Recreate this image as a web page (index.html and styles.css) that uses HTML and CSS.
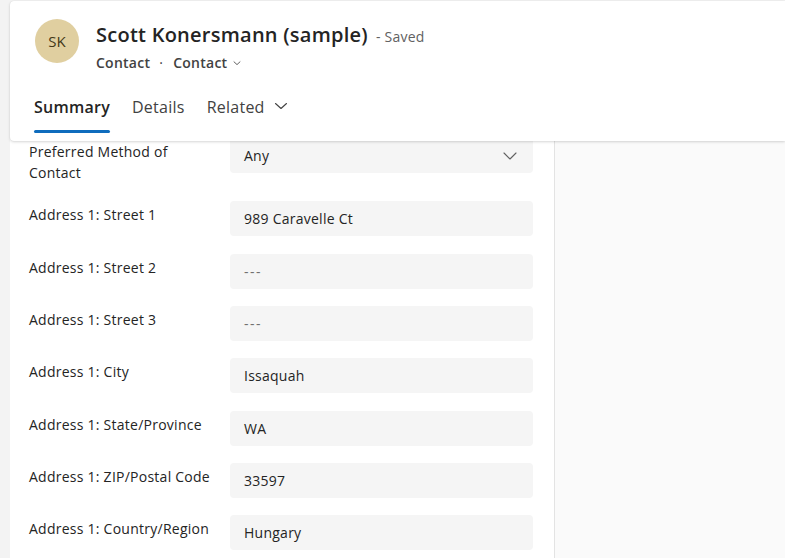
FILE: index.html
```html
<!DOCTYPE html>
<html lang="en">
<head>
<meta charset="utf-8">
<title>Scott Konersmann (sample)</title>
<link rel="stylesheet" href="styles.css">
</head>
<body>
<div class="app">
  <header class="record-header">
    <div class="identity">
      <div class="avatar">SK</div>
      <div class="titles">
        <div class="title-line">
          <h1 class="title">Scott Konersmann (sample)</h1>
          <span class="saved">- Saved</span>
        </div>
        <div class="subtitle">
          <span>Contact</span>
          <span class="dot">·</span>
          <span>Contact</span>
          <svg class="sub-chev" width="10" height="10" viewBox="0 0 10 10"><path d="M2 3.8 L5 6.6 L8 3.8" fill="none" stroke="#616161" stroke-width="1" stroke-linecap="round" stroke-linejoin="round"/></svg>
        </div>
      </div>
    </div>
    <nav class="tabs">
      <span class="tab active">Summary</span>
      <span class="tab">Details</span>
      <span class="tab">Related
        <svg class="tab-chev" width="14" height="14" viewBox="0 0 14 14"><path d="M1.5 4.5 L7 9.5 L12.5 4.5" fill="none" stroke="#424242" stroke-width="1.1" stroke-linecap="round" stroke-linejoin="round"/></svg>
      </span>
    </nav>
  </header>

  <main class="workspace">
    <section class="form-panel">
      <div class="row">
        <label class="label">Preferred Method of Contact</label>
        <div class="field select">
          <span>Any</span>
          <svg class="sel-chev" width="14" height="14" viewBox="0 0 14 14"><path d="M1 4 L7 10 L13 4" fill="none" stroke="#616161" stroke-width="1.1" stroke-linecap="round" stroke-linejoin="round"/></svg>
        </div>
      </div>
      <div class="row">
        <label class="label">Address 1: Street 1</label>
        <div class="field">989 Caravelle Ct</div>
      </div>
      <div class="row">
        <label class="label">Address 1: Street 2</label>
        <div class="field empty">---</div>
      </div>
      <div class="row">
        <label class="label">Address 1: Street 3</label>
        <div class="field empty">---</div>
      </div>
      <div class="row">
        <label class="label">Address 1: City</label>
        <div class="field">Issaquah</div>
      </div>
      <div class="row">
        <label class="label">Address 1: State/Province</label>
        <div class="field">WA</div>
      </div>
      <div class="row">
        <label class="label">Address 1: ZIP/Postal Code</label>
        <div class="field">33597</div>
      </div>
      <div class="row">
        <label class="label">Address 1: Country/Region</label>
        <div class="field">Hungary</div>
      </div>
    </section>
    <aside class="side"></aside>
  </main>
</div>
</body>
</html>
```

FILE: styles.css
```css
* { box-sizing: border-box; }

html, body {
  margin: 0;
  padding: 0;
  height: 100%;
  overflow: hidden;
}

body {
  background: #f3f3f3;
  font-family: "Open Sans", "Noto Sans", sans-serif;
  letter-spacing: 0.25px;
  color: #242424;
}

.app {
  padding: 1px 0 0 10px;
  height: 100%;
  display: flex;
  flex-direction: column;
}

.record-header {
  position: relative;
  z-index: 2;
  background: #ffffff;
  border-radius: 4px 0 0 4px;
  box-shadow: 0 1px 3px rgba(0, 0, 0, 0.16), 0 0 1px rgba(0, 0, 0, 0.10);
  height: 140px;
  padding: 18px 0 0 25px;
  flex-shrink: 0;
}

.identity {
  display: flex;
  align-items: flex-start;
  gap: 17px;
}

.avatar {
  width: 44px;
  height: 44px;
  border-radius: 50%;
  background: #e0cfa0;
  color: #433817;
  font-size: 15px;
  font-weight: 500;
  letter-spacing: 0;
  display: flex;
  align-items: center;
  justify-content: center;
}

.titles {
  display: flex;
  flex-direction: column;
}

.title-line {
  display: flex;
  align-items: baseline;
  gap: 8px;
  height: 32px;
}

.title {
  margin: 0;
  font-size: 20px;
  font-weight: 600;
  color: #242424;
  line-height: 32px;
}

.saved {
  font-size: 14px;
  color: #616161;
}

.subtitle {
  display: flex;
  align-items: center;
  font-size: 14px;
  font-weight: 600;
  color: #424242;
  height: 22px;
}

.subtitle .dot {
  margin: 0 10px 0 9px;
  font-weight: 400;
}

.sub-chev {
  margin-left: 5px;
  margin-top: 2px;
}

.tabs {
  display: flex;
  gap: 22px;
  margin: 19px 0 0 -1px;
}

.tab {
  position: relative;
  font-size: 16px;
  color: #424242;
  height: 48px;
  line-height: 30px;
  display: flex;
  align-items: flex-start;
}

.tab.active {
  font-weight: 600;
  color: #242424;
}

.tab.active::after {
  content: "";
  position: absolute;
  left: 0;
  right: 0;
  bottom: 7px;
  height: 3px;
  border-radius: 2px;
  background: #0f6cbd;
}

.tab-chev {
  margin: 7px 0 0 9px;
}

.workspace {
  flex: 1;
  display: flex;
  margin-top: -3px;
}

.form-panel {
  width: 545px;
  background: #ffffff;
  border-right: 1px solid #e3e3e3;
  padding: 0 21px 0 19px;
  display: flex;
  flex-direction: column;
}

.side {
  flex: 1;
  background: #fafafa;
}

.row {
  display: flex;
  align-items: flex-start;
  padding-bottom: 17.35px;
}

.label {
  width: 201px;
  flex-shrink: 0;
  padding: 3px 14px 1px 0;
  font-size: 14px;
  line-height: 21px;
  color: #242424;
}

.field {
  flex: 1;
  height: 35px;
  background: #f5f5f5;
  border-radius: 4px;
  padding: 0 14px;
  display: flex;
  align-items: center;
  font-size: 14px;
  color: #242424;
}

.field.empty {
  color: #707070;
  letter-spacing: 1.5px;
}

.select {
  justify-content: space-between;
  padding-right: 16px;
}
```
